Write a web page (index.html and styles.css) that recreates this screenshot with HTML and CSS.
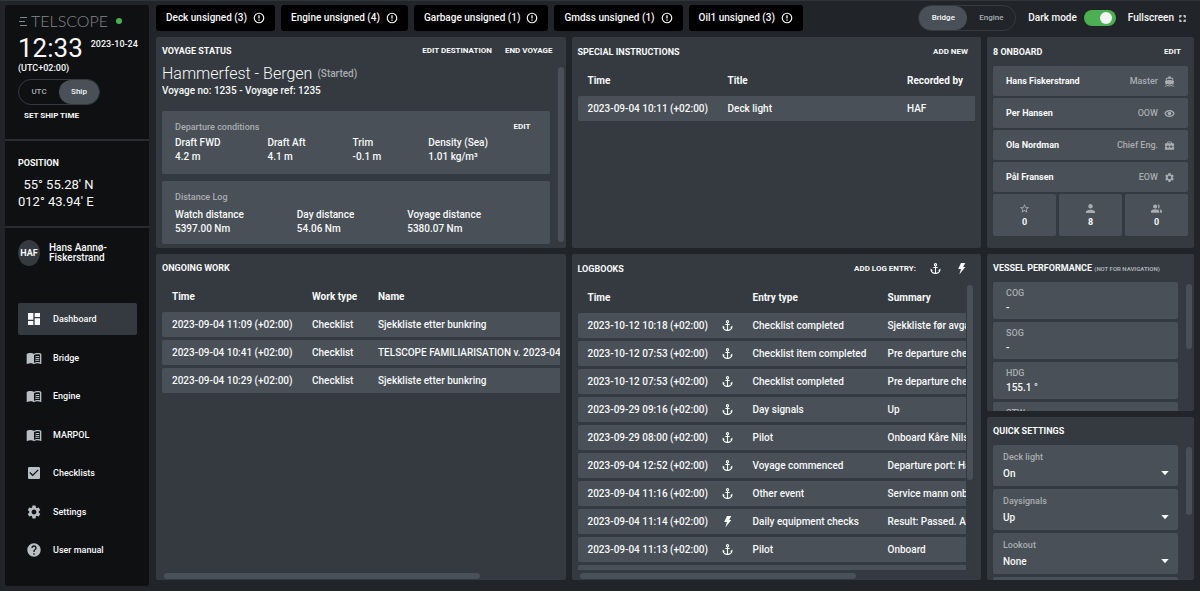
FILE: index.html
```
<!DOCTYPE html>
<html lang="en">
<head>
<meta charset="utf-8">
<title>Telscope dashboard</title>
<link rel="stylesheet" href="styles.css">
</head>
<body>
<svg class="sprite" aria-hidden="true">
  <symbol id="i-anchor" viewBox="0 0 24 24"><path d="M17 15l1.55 1.55c-.96 1.69-3.33 3.04-5.55 3.37V11h3V9h-3V7.82C14.16 7.4 15 6.3 15 5c0-1.65-1.35-3-3-3S9 3.35 9 5c0 1.3.84 2.4 2 2.82V9H8v2h3v8.92c-2.22-.33-4.59-1.68-5.55-3.37L7 15l-4-3v3c0 3.88 4.92 7 9 7s9-3.12 9-7v-3l-4 3zM12 4c.55 0 1 .45 1 1s-.45 1-1 1-1-.45-1-1 .45-1 1-1z"/></symbol>
  <symbol id="i-bolt" viewBox="0 0 24 24"><path d="M11 2h8l-4 7h4L8 23l3-10H6z"/></symbol>
  <symbol id="i-alert" viewBox="0 0 24 24"><path d="M10.700 15h2.600v2.300h-2.600zm0-8.500h2.600v6.500h-2.600z"/><circle cx="12" cy="12" r="9.500" fill="none" stroke="currentColor" stroke-width="2.300"/></symbol>
  <symbol id="i-dash" viewBox="0 0 24 24"><path d="M3 13h8V3H3v10zm0 8h8v-6H3v6zm10 0h8V11h-8v10zm0-18v6h8V3h-8z"/></symbol>
  <symbol id="i-book" viewBox="0 0 24 24"><path d="M21 5c-1.11-.35-2.33-.5-3.5-.5-1.95 0-4.05.4-5.5 1.5-1.45-1.1-3.55-1.5-5.5-1.5S2.45 4.9 1 6v14.65c0 .25.25.5.5.5.1 0 .15-.05.25-.05C3.1 20.45 5.05 20 6.5 20c1.95 0 4.05.4 5.5 1.5 1.35-.85 3.8-1.5 5.5-1.5 1.65 0 3.35.3 4.75 1.05.1.05.15.05.25.05.25 0 .5-.25.5-.5V6c-.6-.45-1.25-.75-2-1zm0 13.5c-1.1-.35-2.3-.5-3.5-.5-1.7 0-4.15.65-5.5 1.5V8c1.35-.85 3.8-1.5 5.5-1.5 1.2 0 2.4.15 3.5.5v11.500z"/><path d="M14 9.900c2-.8 4-.9 6-.5v1.500c-2-.4-4-.3-6 .5zm0 2.700c2-.8 4-.9 6-.5v1.500c-2-.4-4-.3-6 .5zm0 2.700c2-.8 4-.9 6-.5v1.500c-2-.4-4-.3-6 .5z"/></symbol>
  <symbol id="i-check" viewBox="0 0 24 24"><path d="M19 3H5c-1.110 0-2 .9-2 2v14c0 1.100.89 2 2 2h14c1.110 0 2-.9 2-2V5c0-1.100-.89-2-2-2zm-9 14l-5-5 1.410-1.410L10 14.170l7.590-7.590L19 8l-9 9z"/></symbol>
  <symbol id="i-gear" viewBox="0 0 24 24"><path d="M19.140 12.940c.04-.3.06-.61.06-.94 0-.32-.02-.64-.07-.94l2.030-1.580c.18-.14.23-.41.12-.61l-1.920-3.320c-.12-.22-.37-.29-.59-.22l-2.390.96c-.5-.38-1.030-.7-1.620-.94l-.36-2.540c-.04-.24-.24-.41-.48-.41h-3.840c-.24 0-.43.17-.47.41l-.36 2.540c-.59.24-1.130.57-1.620.94l-2.390-.96c-.22-.08-.47 0-.59.22L2.740 8.870c-.12.21-.08.47.12.61l2.030 1.580c-.05.3-.09.63-.09.94s.02.64.07.94l-2.030 1.580c-.18.14-.23.41-.12.61l1.920 3.320c.12.22.37.29.59.22l2.390-.96c.5.38 1.030.7 1.620.94l.36 2.540c.05.24.24.41.48.41h3.840c.24 0 .44-.17.47-.41l.36-2.540c.59-.24 1.130-.56 1.620-.94l2.390.96c.22.08.47 0 .59-.22l1.920-3.320c.12-.22.07-.47-.12-.61l-2.010-1.580zM12 15.600c-1.980 0-3.600-1.620-3.600-3.600s1.620-3.600 3.600-3.600 3.600 1.620 3.600 3.600-1.620 3.600-3.600 3.600z"/></symbol>
  <symbol id="i-help" viewBox="0 0 24 24"><path d="M12 2C6.480 2 2 6.480 2 12s4.480 10 10 10 10-4.480 10-10S17.520 2 12 2zm1 17h-2v-2h2v2zm2.070-7.750l-.9.920C13.450 12.900 13 13.500 13 15h-2v-.5c0-1.100.45-2.100 1.170-2.830l1.240-1.260c.37-.36.59-.86.59-1.410 0-1.100-.9-2-2-2s-2 .9-2 2H8c0-2.210 1.790-4 4-4s4 1.790 4 4c0 .88-.36 1.680-.93 2.250z"/></symbol>
  <symbol id="i-full" viewBox="0 0 24 24"><path d="M1 9V1h8v4H5v4zM15 1h8v8h-4V5h-4zM1 15h4v4h4v4H1zM19 15h4v8h-8v-4h4z"/></symbol>
  <symbol id="i-ship" viewBox="0 0 24 24"><path d="M20 21c-1.390 0-2.780-.47-4-1.320-2.440 1.710-5.560 1.710-8 0C6.780 20.530 5.390 21 4 21H2v2h2c1.380 0 2.740-.35 4-.99 2.520 1.290 5.480 1.290 8 0 1.260.65 2.620.99 4 .99h2v-2h-2zM3.950 19H4c1.600 0 3.020-.88 4-2 .98 1.120 2.400 2 4 2s3.020-.88 4-2c.98 1.120 2.400 2 4 2h.05l1.890-6.680c.08-.26.06-.54-.06-.78s-.34-.42-.6-.5L20 10.620V6c0-1.100-.9-2-2-2h-3V1H9v3H6c-1.100 0-2 .9-2 2v4.620l-1.290.42c-.26.08-.48.26-.6.5s-.15.52-.06.78L3.950 19zM6 6h12v3.970L12 8 6 9.970V6z"/></symbol>
  <symbol id="i-eye" viewBox="0 0 24 24"><path fill="none" stroke="currentColor" stroke-width="2.500" d="M2 12c4-8.500 16-8.500 20 0-4 8.500-16 8.500-20 0z"/><circle cx="12" cy="12" r="4"/></symbol>
  <symbol id="i-case" viewBox="0 0 24 24"><path d="M20 7h-3V5l-2-2H9L7 5v2H4c-1.100 0-2 .9-2 2v5h5v-2h3v2h4v-2h3v2h5V9c0-1.100-.9-2-2-2zM9 7V5h6v2zM2 15.500h5V17h3v-1.500h4V17h3v-1.500h5V21H2z"/></symbol>
  <symbol id="i-star" viewBox="0 0 24 24"><path d="M22 9.240l-7.190-.62L12 2 9.190 8.630 2 9.240l5.460 4.730L5.820 21 12 17.270 18.180 21l-1.630-7.030L22 9.240zM12 15.400l-3.760 2.270 1-4.280-3.320-2.880 4.380-.38L12 6.100l1.710 4.040 4.380.38-3.320 2.880 1 4.280L12 15.400z"/></symbol>
  <symbol id="i-person" viewBox="0 0 24 24"><path d="M12 12c2.210 0 4-1.790 4-4s-1.790-4-4-4-4 1.790-4 4 1.790 4 4 4zm0 2c-2.670 0-8 1.340-8 4v2h16v-2c0-2.660-5.330-4-8-4z" transform="translate(-3 -3) scale(1.250)"/></symbol>
  <symbol id="i-people" viewBox="0 0 24 24"><circle cx="9" cy="7.500" r="4.500"/><path d="M0 21v-3c0-6 18-6 18 0v3zM14.500 3.300c6-1.500 6 9.900 0 8.400 2-2.400 2-6 0-8.400zM18 13.600c4 .6 6 2 6 4.400v3h-4v-3c0-2-.8-3.300-2-4.400z"/></symbol>
  <symbol id="i-caret" viewBox="0 0 24 24"><path d="M1 6h22L12 19z"/></symbol>
</svg>

<div class="app">
  <aside class="sidebar">
    <section class="block clock">
      <div class="brand">
        <svg class="bars" viewBox="0 0 8 11"><path d="M1 1.500h7M0 5.500h6M1 9.500h7" fill="none" stroke="currentColor"/></svg>
        <span>TELSCOPE</span><i class="online"></i>
      </div>
      <div class="time-row"><time class="time">12:33</time><span class="date">2023-10-24</span></div>
      <div class="zone">(UTC+02:00)</div>
      <div class="segment" role="radiogroup" aria-label="Time zone">
        <label><input type="radio" name="zone"><span>UTC</span></label>
        <label><input type="radio" name="zone" checked><span>Ship</span></label>
      </div>
      <button class="action set-time">SET SHIP TIME</button>
    </section>
    <section class="block position">
      <h2 class="title">POSITION</h2>
      <div class="coords"><div>55° 55.28' N</div><div>012° 43.94' E</div></div>
    </section>
    <section class="user"><span class="avatar">HAF</span><span>Hans Aannø-<br>Fiskerstrand</span></section>
    <nav class="nav">
      <a href="#" class="active"><svg><use href="#i-dash"/></svg>Dashboard</a>
      <a href="#"><svg><use href="#i-book"/></svg>Bridge</a>
      <a href="#"><svg><use href="#i-book"/></svg>Engine</a>
      <a href="#"><svg><use href="#i-book"/></svg>MARPOL</a>
      <a href="#"><svg><use href="#i-check"/></svg>Checklists</a>
      <a href="#"><svg><use href="#i-gear"/></svg>Settings</a>
      <a href="#"><svg><use href="#i-help"/></svg>User manual</a>
    </nav>
  </aside>

  <main class="main">
    <header class="topbar">
      <button class="unsigned">Deck unsigned (3)<svg><use href="#i-alert"/></svg></button>
      <button class="unsigned">Engine unsigned (4)<svg><use href="#i-alert"/></svg></button>
      <button class="unsigned">Garbage unsigned (1)<svg><use href="#i-alert"/></svg></button>
      <button class="unsigned">Gmdss unsigned (1)<svg><use href="#i-alert"/></svg></button>
      <button class="unsigned">Oil1 unsigned (3)<svg><use href="#i-alert"/></svg></button>
      <div class="tools">
        <div class="segment wide" role="radiogroup" aria-label="Department">
          <label><input type="radio" name="dept" checked><span>Bridge</span></label>
          <label><input type="radio" name="dept"><span>Engine</span></label>
        </div>
        <label class="mode">Dark mode<input type="checkbox" class="switch" checked></label>
        <button class="fullscreen">Fullscreen<svg><use href="#i-full"/></svg></button>
      </div>
    </header>

    <div class="grid">
      <section class="panel">
        <div class="head"><h2 class="title">VOYAGE STATUS</h2><div class="actions"><button class="action">EDIT DESTINATION</button><button class="action">END VOYAGE</button></div></div>
        <div class="body">
          <div class="scroller voyage">
            <div class="route"><h3>Hammerfest - Bergen</h3><span>(Started)</span></div>
            <p class="ref">Voyage no: 1235 - Voyage ref: 1235</p>
            <div class="card facts">
              <div class="card-head"><span class="muted">Departure conditions</span><button class="action">EDIT</button></div>
              <dl>
                <div><dt>Draft FWD</dt><dd>4.2 m</dd></div>
                <div><dt>Draft Aft</dt><dd>4.1 m</dd></div>
                <div><dt>Trim</dt><dd>-0.1 m</dd></div>
                <div><dt>Density (Sea)</dt><dd>1.01 kg/m³</dd></div>
              </dl>
            </div>
            <div class="card facts distance">
              <div class="card-head"><span class="muted">Distance Log</span></div>
              <dl>
                <div><dt>Watch distance</dt><dd>5397.00 Nm</dd></div>
                <div><dt>Day distance</dt><dd>54.06 Nm</dd></div>
                <div><dt>Voyage distance</dt><dd>5380.07 Nm</dd></div>
              </dl>
            </div>
          </div>
          <div class="track"><i class="thumb thumb-full"></i></div>
        </div>
      </section>

      <section class="panel">
        <div class="head roomy"><h2 class="title">SPECIAL INSTRUCTIONS</h2><div class="actions"><button class="action">ADD NEW</button></div></div>
        <div class="scroller inset">
          <table>
            <colgroup><col class="c-time-l"><col><col class="c-by"></colgroup>
            <thead><tr><th>Time</th><th>Title</th><th>Recorded by</th></tr></thead>
            <tbody><tr><td>2023-09-04 10:11 (+02:00)</td><td>Deck light</td><td>HAF</td></tr></tbody>
          </table>
        </div>
      </section>

      <section class="panel">
        <div class="head roomy"><h2 class="title">8 ONBOARD</h2><div class="actions"><button class="action">EDIT</button></div></div>
        <div class="scroller crew inset">
          <div class="card member"><b>Hans Fiskerstrand</b><span>Master</span><svg><use href="#i-ship"/></svg></div>
          <div class="card member"><b>Per Hansen</b><span>OOW</span><svg><use href="#i-eye"/></svg></div>
          <div class="card member"><b>Ola Nordman</b><span>Chief Eng.</span><svg><use href="#i-case"/></svg></div>
          <div class="card member"><b>Pål Fransen</b><span>EOW</span><svg><use href="#i-gear"/></svg></div>
          <div class="counts">
            <div class="card"><svg><use href="#i-star"/></svg><b>0</b></div>
            <div class="card"><svg><use href="#i-person"/></svg><b>8</b></div>
            <div class="card"><svg><use href="#i-people"/></svg><b>0</b></div>
          </div>
        </div>
      </section>

      <section class="panel tall">
        <div class="head"><h2 class="title">ONGOING WORK</h2></div>
        <div class="scroller inset">
          <table class="work">
            <colgroup><col class="c-time-l"><col class="c-type"><col></colgroup>
            <thead><tr><th>Time</th><th>Work type</th><th>Name</th></tr></thead>
            <tbody>
              <tr><td>2023-09-04 11:09 (+02:00)</td><td>Checklist</td><td>Sjekkliste etter bunkring</td></tr>
              <tr><td>2023-09-04 10:41 (+02:00)</td><td>Checklist</td><td>TELSCOPE FAMILIARISATION v. 2023-04</td></tr>
              <tr><td>2023-09-04 10:29 (+02:00)</td><td>Checklist</td><td>Sjekkliste etter bunkring</td></tr>
            </tbody>
          </table>
        </div>
        <div class="track-x"><i class="thumb thumb-80"></i></div>
      </section>

      <section class="panel tall">
        <div class="head roomy"><h2 class="title">LOGBOOKS</h2><div class="actions"><span class="action">ADD LOG ENTRY:</span><button class="icon-btn" aria-label="Add deck entry"><svg><use href="#i-anchor"/></svg></button><button class="icon-btn" aria-label="Add engine entry"><svg><use href="#i-bolt"/></svg></button></div></div>
        <div class="body logs">
          <div class="scroller">
            <table class="log">
              <colgroup><col class="c-time"><col class="c-icon"><col class="c-entry"><col></colgroup>
              <thead><tr><th>Time</th><th></th><th>Entry type</th><th>Summary</th></tr></thead>
              <tbody>
                <tr><td>2023-10-12 10:18 (+02:00)</td><td><svg><use href="#i-anchor"/></svg></td><td>Checklist completed</td><td>Sjekkliste før avgang</td></tr>
                <tr><td>2023-10-12 07:53 (+02:00)</td><td><svg><use href="#i-anchor"/></svg></td><td>Checklist item completed</td><td>Pre departure checklist</td></tr>
                <tr><td>2023-10-12 07:53 (+02:00)</td><td><svg><use href="#i-anchor"/></svg></td><td>Checklist completed</td><td>Pre departure checklist</td></tr>
                <tr><td>2023-09-29 09:16 (+02:00)</td><td><svg><use href="#i-anchor"/></svg></td><td>Day signals</td><td>Up</td></tr>
                <tr><td>2023-09-29 08:00 (+02:00)</td><td><svg><use href="#i-anchor"/></svg></td><td>Pilot</td><td>Onboard Kåre Nilsen</td></tr>
                <tr><td>2023-09-04 12:52 (+02:00)</td><td><svg><use href="#i-anchor"/></svg></td><td>Voyage commenced</td><td>Departure port: Hammerfest</td></tr>
                <tr><td>2023-09-04 11:16 (+02:00)</td><td><svg><use href="#i-anchor"/></svg></td><td>Other event</td><td>Service mann onboard</td></tr>
                <tr><td>2023-09-04 11:14 (+02:00)</td><td><svg><use href="#i-bolt"/></svg></td><td>Daily equipment checks</td><td>Result: Passed. All ok</td></tr>
                <tr><td>2023-09-04 11:13 (+02:00)</td><td><svg><use href="#i-anchor"/></svg></td><td>Pilot</td><td>Onboard</td></tr>
                <tr><td>2023-09-04 11:12 (+02:00)</td><td><svg><use href="#i-anchor"/></svg></td><td></td><td></td></tr>
              </tbody>
            </table>
          </div>
          <div class="track"><i class="thumb thumb-log"></i></div>
        </div>
        <div class="track-x"><i class="thumb thumb-70"></i></div>
      </section>

      <section class="panel">
        <div class="head"><h2 class="title">VESSEL PERFORMANCE <small>(NOT FOR NAVIGATION)</small></h2></div>
        <div class="body">
          <div class="scroller stack">
            <div class="card metric"><span class="muted">COG</span><span>-</span></div>
            <div class="card metric"><span class="muted">SOG</span><span>-</span></div>
            <div class="card metric"><span class="muted">HDG</span><span>155.1 °</span></div>
            <div class="card metric"><span class="muted">STW</span><span>-</span></div>
          </div>
          <div class="track"><i class="thumb thumb-half"></i></div>
        </div>
      </section>

      <section class="panel">
        <div class="head"><h2 class="title">QUICK SETTINGS</h2></div>
        <div class="body">
          <div class="scroller stack">
            <div class="card setting"><label class="muted" for="deck">Deck light</label><select id="deck"><option>On</option><option>Off</option></select><svg><use href="#i-caret"/></svg></div>
            <div class="card setting"><label class="muted" for="day">Daysignals</label><select id="day"><option>Up</option><option>Down</option></select><svg><use href="#i-caret"/></svg></div>
            <div class="card setting"><label class="muted" for="look">Lookout</label><select id="look"><option>None</option><option>Posted</option></select><svg><use href="#i-caret"/></svg></div>
            <div class="card setting"></div>
          </div>
          <div class="track"><i class="thumb thumb-half"></i></div>
        </div>
      </section>
    </div>
  </main>
</div>
</body>
</html>
```
FILE: styles.css
```
:root {
  --bg: #212529;
  --panel: #343a40;
  --card: #495057;
  --ink: #f8f9fa;
  --muted: #a9adb1;
  --black: #0e1011;
}

* { box-sizing: border-box; }

body {
  margin: 0;
  background: var(--bg);
  color: var(--ink);
  font: 500 10px/14px Roboto, "Liberation Sans", sans-serif;
}

h2, h3, p, dl, dd { margin: 0; }

button, select, input { font: inherit; color: inherit; }

button {
  border: 0;
  padding: 0;
  background: none;
  cursor: pointer;
  white-space: nowrap;
}

svg { display: block; flex: none; fill: currentColor; }

.sprite { position: absolute; width: 0; height: 0; }

.app {
  display: flex;
  gap: 7px;
  height: 100vh;
  padding: 4px 6px 5px 5px;
  border-top: 1px solid #30353a;
}

/* Sidebar */

.sidebar {
  display: flex;
  flex-direction: column;
  flex: none;
  width: 144px;
  background: var(--black);
  border-radius: 3px;
}

.block { border-bottom: 2px solid #292d31; padding: 0 12px 0 13px; }

.clock { height: 136px; padding-top: 8px; }

.brand {
  display: flex;
  align-items: center;
  gap: 4px;
  height: 16px;
  padding-left: 1px;
  color: #85888b;
  font: 300 16px/16px Lato, sans-serif;
}

.bars { width: 8px; height: 11px; }

.online {
  width: 6px;
  height: 6px;
  margin-left: 4px;
  border-radius: 50%;
  background: #4caf50;
}

.time-row { display: flex; gap: 8px; height: 32px; white-space: nowrap; }

.time { font-size: 26px; line-height: 38px; font-weight: 400; }

.date { padding-top: 8px; font-size: 9px; }

.zone { font-size: 9px; line-height: 14px; }

.segment {
  display: inline-flex;
  width: 82px;
  height: 26px;
  border: 1px solid #343a40;
  border-radius: 13px;
  font-size: 8px;
  color: var(--muted);
}

.zone + .segment { margin-top: 4px; }

.segment label { position: relative; flex: 1; display: flex; }

.segment input { position: absolute; inset: 0; margin: 0; opacity: 0; }

.segment span {
  flex: 1;
  line-height: 24px;
  text-align: center;
  border-radius: 12px;
}

.segment input:checked + span { background: var(--card); color: var(--ink); }

.wide { width: 98px; }

.action { font-size: 8px; font-weight: 700; line-height: 14px; }

.set-time { display: block; margin: 4px 0 0 6px; }

.title { font-size: 9px; font-weight: 700; line-height: 14px; white-space: nowrap; }

.title small { color: var(--muted); font-size: 6px; }

.position { height: 87px; padding-top: 15px; }

.coords {
  width: max-content;
  padding-top: 6px;
  font-size: 13px;
  line-height: 17px;
  font-weight: 400;
  text-align: right;
}

.user {
  display: flex;
  align-items: center;
  gap: 9px;
  padding: 12px 12px 0 13px;
  font-size: 10px;
  line-height: 10px;
}

.avatar {
  width: 22px;
  height: 26px;
  border-radius: 50%;
  background: var(--panel);
  font-size: 9px;
  line-height: 26px;
  font-weight: 700;
  text-align: center;
}

.nav {
  display: flex;
  flex: 1;
  flex-direction: column;
  justify-content: space-between;
  padding: 37px 12px 20px 13px;
  font-size: 9px;
}

.nav a {
  display: flex;
  align-items: center;
  gap: 11px;
  height: 32px;
  padding-left: 8px;
  border-radius: 2px;
  color: var(--ink);
  text-decoration: none;
}

.nav svg { width: 16px; height: 16px; color: #b9bfc5; }

.nav .active { background: var(--panel); }

.nav .active svg { color: var(--ink); }

/* Top bar */

.main { display: flex; flex: 1; flex-direction: column; gap: 6px; min-width: 0; padding-bottom: 6px; }

.topbar { display: flex; gap: 6px; height: 26px; }

.unsigned {
  display: flex;
  align-items: center;
  gap: 6px;
  padding: 0 10px;
  border-radius: 3px;
  background: #000;
  font-size: 10px;
}

.unsigned svg { width: 12px; height: 12px; }

.tools { display: flex; align-items: center; gap: 12px; margin-left: auto; padding-right: 8px; }

.mode { display: flex; align-items: center; gap: 7px; }

.switch {
  appearance: none;
  display: flex;
  justify-content: flex-end;
  width: 32px;
  height: 16px;
  margin: 0;
  padding: 2px 4px;
  border-radius: 8px;
  background: #4caf50;
}

.switch::before { content: ""; width: 12px; height: 12px; border-radius: 50%; background: #f1f3f5; }

.fullscreen { display: flex; align-items: center; gap: 5px; }

.fullscreen svg { width: 7px; height: 7px; }

/* Panels */

.grid {
  display: grid;
  flex: 1;
  min-height: 0;
  gap: 6px;
  grid-template-columns: minmax(0, 1fr) minmax(0, 1fr) 207px;
  grid-template-rows: minmax(0, 211fr) minmax(0, 157fr) minmax(0, 163fr);
}

.panel {
  display: flex;
  flex-direction: column;
  min-width: 0;
  overflow: hidden;
  padding-left: 6px;
  border-radius: 2px;
  background: var(--panel);
}

.tall { grid-row: 2 / span 2; }

.head {
  display: flex;
  flex: none;
  align-items: center;
  justify-content: space-between;
  height: 28px;
  padding-right: 13px;
}

.roomy { height: 29px; }

.actions { display: flex; align-items: center; gap: 13px; }

.icon-btn svg { width: 13px; height: 13px; }

.body { display: flex; flex: 1; min-height: 0; gap: 8px; padding-right: 2px; }

.scroller { flex: 1; min-width: 0; min-height: 0; overflow: hidden; }

.inset { margin-right: 6px; }

.logs { gap: 1px; padding-right: 8px; }

.track { flex: none; width: 6px; padding: 2px 0; }

.track-x { flex: none; height: 10px; padding: 3px 6px 1px 2px; }

.thumb { display: block; width: 100%; height: 100%; border-radius: 3px; background: var(--card); }

.thumb-full { height: 98%; }
.thumb-half { height: 52%; }
.thumb-log { height: 69%; }
.track-x .thumb-80 { width: 80%; }
.track-x .thumb-70 { width: 70%; }

.card { border-radius: 2px; background: var(--card); }

.muted { color: var(--muted); }

/* Voyage */

.route { display: flex; align-items: center; gap: 5px; height: 17px; }

.voyage { display: flex; flex-direction: column; }

.route h3 { font-size: 16px; font-weight: 300; }

.route span { font-size: 10px; color: var(--muted); }

.ref { margin-bottom: 11px; line-height: 18px; }

.facts { flex: none; height: 63px; padding: 9px 13px; }

.distance { margin-top: 7px; }

.card-head { display: flex; align-items: center; justify-content: space-between; padding-right: 6px; font-size: 9px; }

.facts dl { display: flex; gap: 47px; padding-top: 2px; }

.distance dl { gap: 53px; padding-top: 4px; }

/* Tables */

table {
  width: 100%;
  border-spacing: 0 3px;
  table-layout: fixed;
  white-space: nowrap;
}

th { height: 24px; padding: 0 0 0 10px; font-weight: 700; text-align: left; }

td { height: 25px; padding: 0 0 0 10px; background: var(--card); }

td:first-child { border-radius: 2px 0 0 2px; }

td svg { width: 13px; height: 13px; }

.work { width: 500px; }

.log { width: 541px; }

.c-time-l { width: 140px; }
.c-time { width: 133px; }
.c-icon { width: 32px; }
.c-entry { width: 135px; }
.c-type { width: 66px; }
.c-by { width: 78px; }

/* Crew */

.crew { display: flex; flex-direction: column; gap: 2px; }

.member { display: flex; align-items: center; gap: 6px; height: 30px; padding: 0 13px; font-size: 9px; }

.member b { flex: 1; }

.member span { color: var(--muted); }

.member svg { width: 11px; height: 11px; color: var(--muted); }

.counts { display: grid; grid-template-columns: repeat(3, 1fr); gap: 3px; }

.counts .card {
  display: flex;
  flex-direction: column;
  align-items: center;
  gap: 1px;
  height: 42px;
  padding-top: 9px;
  font-size: 9px;
}

.counts svg { width: 11px; height: 11px; color: var(--muted); }

/* Side cards */

.stack { display: flex; flex-direction: column; gap: 3px; }

.metric {
  display: flex;
  flex: none;
  flex-direction: column;
  gap: 1px;
  height: 37px;
  padding: 4px 13px;
}

.metric .muted, .setting .muted { font-size: 9px; }

.setting { position: relative; flex: none; height: 41px; padding: 5px 10px; }

.setting label { display: block; }

.setting select {
  appearance: none;
  display: block;
  width: 100%;
  height: 20px;
  padding: 0;
  border: 0;
  background: none;
}

.setting svg { position: absolute; right: 9px; bottom: 9px; width: 8px; height: 8px; }
```
